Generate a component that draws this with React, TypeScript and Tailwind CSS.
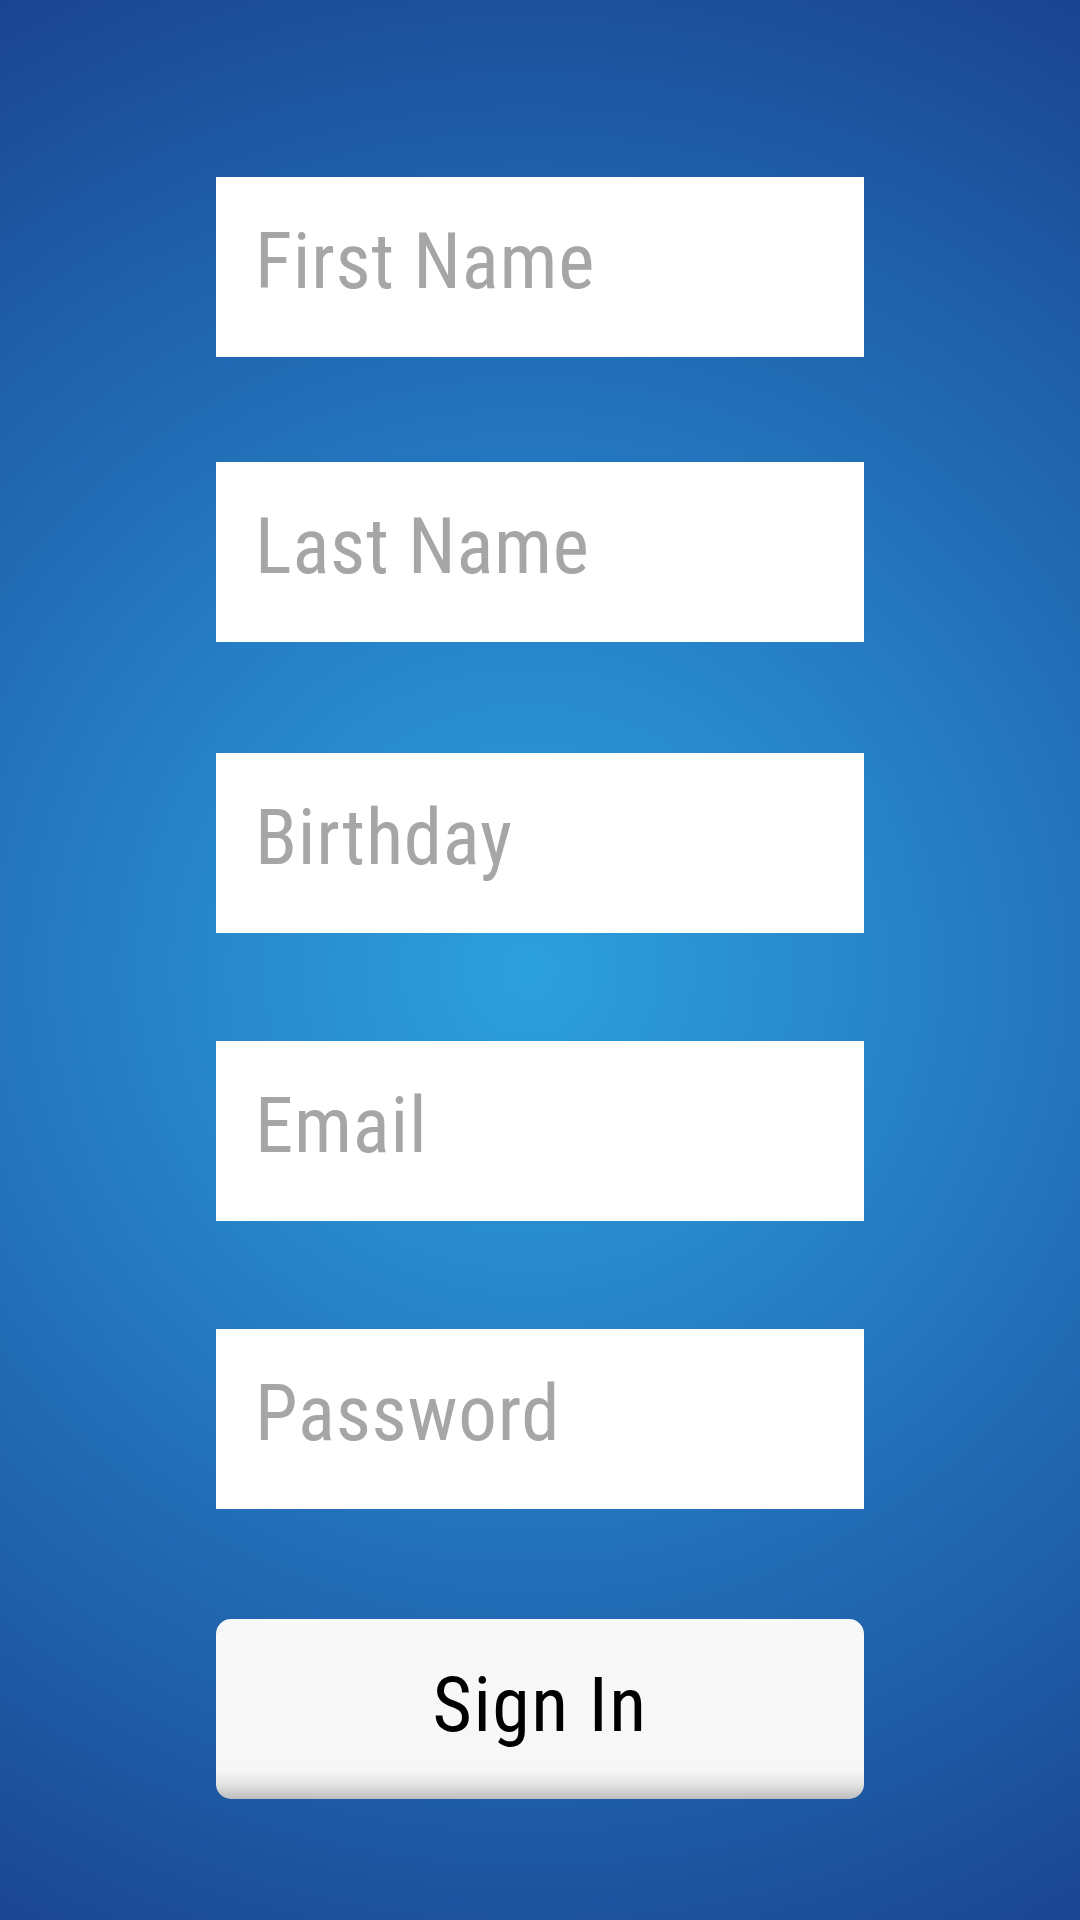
const fields = [
  { label: "First Name", type: "text", gap: "mt-[177px]" },
  { label: "Last Name", type: "text", gap: "mt-[105px]" },
  { label: "Birthday", type: "text", gap: "mt-[111px]" },
  { label: "Email", type: "email", gap: "mt-[108px]" },
  { label: "Password", type: "password", gap: "mt-[108px]" },
];

const App = () => {
  return (
    <div className="min-h-[1920px] w-[1080px] bg-[radial-gradient(circle_at_49%_50.5%,#2ca0de_0%,#2888cc_28%,#2373bb_50%,#1f5fa9_72%,#1b4793_96%,#1a4490_100%)] font-['Roboto',sans-serif]">
      <form className="mx-auto flex w-[648px] flex-col">
        {fields.map((f) => (
          <input
            key={f.label}
            type={f.type}
            placeholder={f.label}
            className={`${f.gap} h-[180px] w-full bg-white pl-[39px] pb-[10px] text-[77px] font-stretch-[75%] tracking-[0.01em] text-[#333] outline-none placeholder:text-[#a6a6a6]`}
          />
        ))}
        <button
          type="button"
          className="mt-[110px] h-[180px] w-full rounded-[15px] bg-[linear-gradient(to_bottom,#f8f8f8_0%,#f7f7f7_84%,#e2e2e2_92%,#bdbdbd_100%)] pb-[8px] text-[76px] font-stretch-[75%] tracking-[0.02em] text-black"
        >
          Sign In
        </button>
      </form>
    </div>
  );
};

export default App;
